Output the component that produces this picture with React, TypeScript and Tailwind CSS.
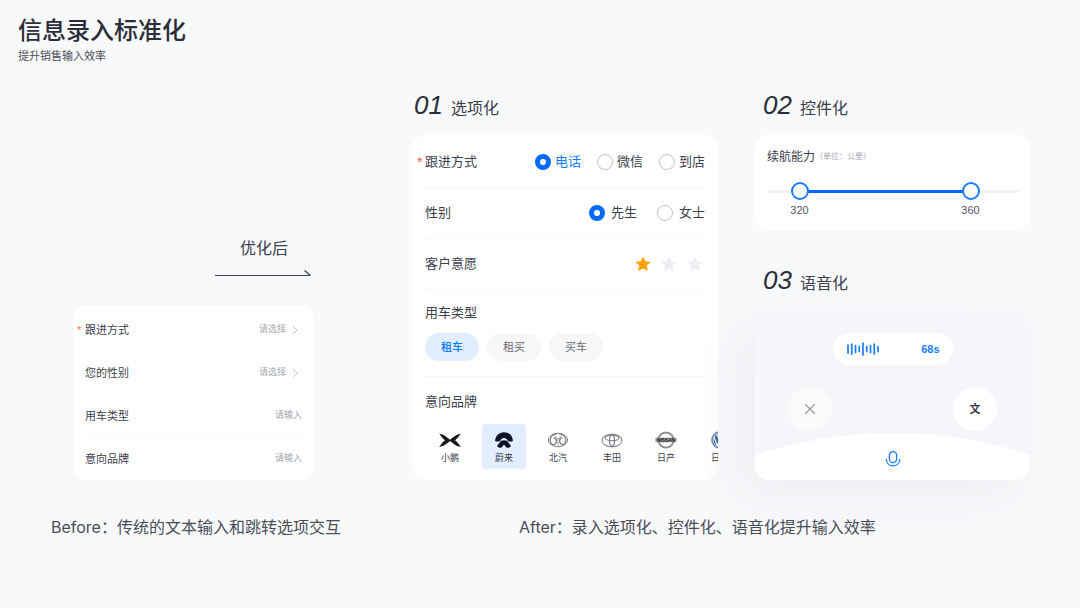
import { useState, type ReactNode } from 'react';
import clsx from 'clsx';

interface HeadingProps {
  index: string;
  title: string;
  className?: string;
}

function Heading({ index, title, className = '' }: HeadingProps) {
  return (
    <h2 className={`flex h-8 items-baseline gap-2 leading-8 text-[#2b2e38] ${className}`}>
      <span className="text-[26px] italic">{index}</span>
      <span className="text-base text-[#3c404b]">{title}</span>
    </h2>
  );
}

/* ---------- Before ---------- */

interface PlainFieldProps {
  id: string;
  label: string;
  required?: boolean;
  divider?: boolean;
  options?: string[];
}

function PlainField({ id, label, required, divider, options }: PlainFieldProps) {
  return (
    <div
      className={clsx(
        'relative flex h-[43px] items-center justify-between border-t',
        divider ? 'border-[#f6f7f9]' : 'border-transparent'
      )}
    >
      {required && <span className="absolute -left-2 text-[11px] text-[#ff7433]">*</span>}
      <label htmlFor={id} className="shrink-0 text-[11px] text-[#3c404b]">
        {label}
      </label>
      {options ? (
        <div className="flex items-center gap-1 pr-[3px]">
          <select id={id} defaultValue="" className="appearance-none bg-transparent text-[9px] text-[#a3a6ae] outline-none">
            <option value="">请选择</option>
            {options.map((option) => (
              <option key={option}>{option}</option>
            ))}
          </select>
          <svg className="h-2.5 w-2" viewBox="0 0 8 10" fill="none" stroke="#c3c6cc" strokeWidth="1">
            <path d="M2 1l4 4-4 4" />
          </svg>
        </div>
      ) : (
        <input
          id={id}
          placeholder="请输入"
          className="w-20 bg-transparent text-right text-[9px] text-[#3c404b] outline-none placeholder:text-[#a3a6ae]"
        />
      )}
    </div>
  );
}

function BeforeForm() {
  return (
    <form className="rounded-[10px] bg-white px-[11px] pt-0.5">
      <PlainField id="before-follow" label="跟进方式" required options={['电话', '微信', '到店']} />
      <PlainField id="before-gender" label="您的性别" options={['先生', '女士']} />
      <PlainField id="before-usage" label="用车类型" />
      <PlainField id="before-brand" label="意向品牌" divider />
    </form>
  );
}

/* ---------- 01 options ---------- */

function OptionRow({ label, required, children }: { label: string; required?: boolean; children: ReactNode }) {
  return (
    <div className="relative flex h-[51px] items-center justify-between border-b border-[#f6f7f9]">
      {required && <span className="absolute -left-2 text-sm text-[#ff5a4e]">*</span>}
      <span>{label}</span>
      {children}
    </div>
  );
}

interface RadioProps {
  name: string;
  value: string;
  current: string;
  highlight?: boolean;
  onSelect: (value: string) => void;
  className: string;
}

function Radio({ name, value, current, highlight, onSelect, className }: RadioProps) {
  const checked = value === current;
  return (
    <label className={clsx('flex items-center', className, checked && highlight && 'text-[#0a7aff]')}>
      <input
        type="radio"
        name={name}
        value={value}
        checked={checked}
        onChange={() => onSelect(value)}
        className="size-4 appearance-none rounded-full border border-[#bfc3cd] bg-white checked:border-[5px] checked:border-[#006aff]"
      />
      {value}
    </label>
  );
}

function XpengLogo() {
  return (
    <svg className="h-[18px] w-[22px]" viewBox="0 0 22 18" fill="#15171c">
      <path d="M.2 2.600l4.400 1.300 6 4.300v1.100H5.800L2.600 6z" />
      <path d="M21.800 2.600l-4.400 1.300-6 4.300v1.100h4.800L19.400 6z" />
      <path d="M.2 16l4.400-1.300 6-4.300V9.300H5.800l-3.200 3.300z" />
      <path d="M21.800 16l-4.400-1.300-6-4.300V9.300h4.800l3.200 3.300z" />
      <path d="M6.500 8.700h9v1.300h-9z" />
    </svg>
  );
}

function NioLogo() {
  return (
    <svg className="h-[18px] w-[22px]" viewBox="0 0 22 18" fill="#0c1424">
      <path d="M2.100 9.900C2.300 4.900 6 1.200 11 1.200s8.700 3.700 8.900 8.700c-1.500.7-3.300.7-4.900 0C14 7.900 12.700 6.900 11 6.900S8 7.900 7 9.900c-1.600.7-3.400.7-4.900 0z" />
      <path d="M11 9.300c2.300 0 3.500.7 4.400 2.300l2.600 3.300c-1 1.400-2.500 2-4.300 1.900L11 13.700l-2.700 3.100c-1.800.1-3.300-.5-4.300-1.900l2.600-3.300C7.500 10 8.700 9.300 11 9.300z" />
    </svg>
  );
}

function BaicLogo() {
  return (
    <svg className="h-[18px] w-[22px]" viewBox="0 0 22 18" fill="none" stroke="#85878b">
      <ellipse cx="11" cy="9" rx="9.600" ry="6.800" strokeWidth="1" />
      <path d="M9.800 3.200C6 2.800 3.200 5.600 3.200 9c0 2.400 1.300 4.300 2.800 4.600 1.800.3 3.400-1.600 3.400-3.600 0-1.700-1-3-2.600-3.200" strokeWidth="1.400" />
      <path d="M12.200 3.200C16 2.800 18.800 5.600 18.800 9c0 2.400-1.300 4.300-2.800 4.600-1.800.3-3.400-1.600-3.400-3.600 0-1.700 1-3 2.600-3.200" strokeWidth="1.400" />
      <path d="M7.500 4.200L11 8.200l3.500-4M11 8.200v6.600" stroke="#a5a7ab" />
    </svg>
  );
}

function ToyotaLogo() {
  return (
    <svg className="h-[18px] w-[22px]" viewBox="0 0 22 18" fill="none" stroke="#8d9197">
      <ellipse cx="11" cy="9.500" rx="9.900" ry="6.300" strokeWidth="1.200" />
      <ellipse cx="11" cy="7" rx="6.800" ry="2.600" strokeWidth="1.200" />
      <ellipse cx="11" cy="9.500" rx="2.500" ry="5.700" stroke="#74787e" strokeWidth="1.200" />
    </svg>
  );
}

function NissanLogo() {
  return (
    <svg className="h-[18px] w-[22px]" viewBox="0 0 22 18">
      <circle cx="11" cy="9" r="7.600" fill="none" stroke="#8b8d90" strokeWidth="2" />
      <rect x=".4" y="6.700" width="21.200" height="4.600" rx=".8" fill="#9b9da0" />
      <text x="11" y="10.700" textAnchor="middle" fontSize="4.800" fontWeight="700" fill="#1f2023">
        NISSAN
      </text>
    </svg>
  );
}

function VolkswagenLogo() {
  return (
    <svg className="h-[18px] w-[22px]" viewBox="0 0 22 18" fill="none">
      <circle cx="11" cy="9" r="8.500" fill="#35639b" stroke="#8fa3bd" strokeWidth=".8" />
      <circle cx="11" cy="9" r="7" stroke="#dfe7f0" strokeWidth="1" />
      <path d="M7.400 3L11 9.500 14.600 3M4.800 5.500l3.400 9L11 9.500l2.800 5 3.400-9" stroke="#eef3f9" strokeWidth="1.400" />
    </svg>
  );
}

const brands = [
  { id: 'xpeng', name: '小鹏', logo: <XpengLogo /> },
  { id: 'nio', name: '蔚来', logo: <NioLogo /> },
  { id: 'baic', name: '北汽', logo: <BaicLogo /> },
  { id: 'toyota', name: '丰田', logo: <ToyotaLogo /> },
  { id: 'nissan', name: '日产', logo: <NissanLogo /> },
  { id: 'vw', name: '日产', logo: <VolkswagenLogo /> },
];

function OptionsForm() {
  const [follow, setFollow] = useState('电话');
  const [gender, setGender] = useState('先生');
  const [rating, setRating] = useState(1);
  const [usage, setUsage] = useState('租车');
  const [brand, setBrand] = useState('nio');

  return (
    <form className="grow overflow-hidden rounded-[14px] bg-white px-[13px] pt-0.5 text-[13px] leading-5 text-[#3c404b]">
      <OptionRow label="跟进方式" required>
        <div className="flex gap-4">
          {['电话', '微信', '到店'].map((value) => (
            <Radio key={value} name="follow" value={value} current={follow} highlight onSelect={setFollow} className="gap-1" />
          ))}
        </div>
      </OptionRow>
      <OptionRow label="性别">
        <div className="flex gap-5">
          {['先生', '女士'].map((value) => (
            <Radio key={value} name="gender" value={value} current={gender} onSelect={setGender} className="gap-1.5" />
          ))}
        </div>
      </OptionRow>
      <OptionRow label="客户意愿">
        <div className="flex gap-2.5 pr-0.5">
          {[1, 2, 3].map((star) => (
            <button key={star} type="button" aria-label={`${star} 星`} onClick={() => setRating(star)}>
              <svg className="size-4" viewBox="0 0 16 16" fill={star <= rating ? '#ffa200' : '#ebeef3'}>
                <path d="M8 .4l2.300 4.900 5.400.6-4 3.700 1.100 5.400L8 12.400 3.200 15l1.100-5.400-4-3.700 5.400-.6z" />
              </svg>
            </button>
          ))}
        </div>
      </OptionRow>

      <div className="border-b border-[#f6f7f9] pb-[15px] pt-[13px]">
        <p>用车类型</p>
        <div className="mt-2.5 flex gap-2">
          {['租车', '租买', '买车'].map((value) => (
            <button
              key={value}
              type="button"
              onClick={() => setUsage(value)}
              className={clsx(
                'h-7 w-[54px] rounded-full text-[11px]',
                value === usage ? 'bg-[#e2eeff] font-medium text-[#0a7aff]' : 'bg-[#f7f7f8] text-[#6d6f76]'
              )}
            >
              {value}
            </button>
          ))}
        </div>
      </div>

      <div className="pb-[11px] pt-[15px]">
        <p>意向品牌</p>
        <div className="mt-3 flex gap-2.5 pl-[3px]">
          {brands.map(({ id, name, logo }) => (
            <button
              key={id}
              type="button"
              onClick={() => setBrand(id)}
              className={clsx(
                'flex h-[45px] w-11 shrink-0 flex-col items-center gap-[3px] rounded-[4px] pt-[7px]',
                id === brand && 'bg-[#e2eeff]'
              )}
            >
              {logo}
              <span className="text-[9px] leading-3">{name}</span>
            </button>
          ))}
        </div>
      </div>
    </form>
  );
}

/* ---------- 02 range ---------- */

const MIN = 314.5;
const MAX = 369;

// Centre of an 18px thumb along the track
function thumbCentre(value: number) {
  const ratio = (value - MIN) / (MAX - MIN);
  return `calc(9px + (100% - 18px) * ${ratio})`;
}

const rangeClass =
  'pointer-events-none absolute inset-0 h-[18px] w-full appearance-none bg-transparent outline-none [&::-webkit-slider-thumb]:pointer-events-auto [&::-webkit-slider-thumb]:size-[18px] [&::-webkit-slider-thumb]:appearance-none [&::-webkit-slider-thumb]:rounded-full [&::-webkit-slider-thumb]:border-2 [&::-webkit-slider-thumb]:border-[#1a7dff] [&::-webkit-slider-thumb]:bg-white';

function RangeCard() {
  const [low, setLow] = useState(320);
  const [high, setHigh] = useState(360);

  return (
    <div className="rounded-[14px] bg-white px-3 py-3">
      <p className="flex items-center text-xs leading-5 text-[#3c404b]">
        续航能力
        <span className="text-[8px] text-[#a3a6ae]">（单位：公里）</span>
      </p>
      <div className="relative mt-[15px] flex h-[18px] items-center">
        <div className="h-[3px] w-full rounded-full bg-[#f0f0f7]" />
        <div
          className="absolute h-[3px] bg-[#006aff]"
          style={{ left: thumbCentre(low), right: `calc(100% - ${thumbCentre(high)})` }}
        />
        <input
          type="range"
          aria-label="最低续航"
          min={MIN}
          max={MAX}
          step={0.5}
          value={low}
          onChange={(e) => setLow(Math.min(Number(e.target.value), high))}
          className={rangeClass}
        />
        <input
          type="range"
          aria-label="最高续航"
          min={MIN}
          max={MAX}
          step={0.5}
          value={high}
          onChange={(e) => setHigh(Math.max(Number(e.target.value), low))}
          className={rangeClass}
        />
      </div>
      <div className="relative mt-0.5 h-4 text-[11px] leading-4 text-[#55585f]">
        <output className="absolute -translate-x-1/2" style={{ left: thumbCentre(low) }}>
          {low}
        </output>
        <output className="absolute -translate-x-1/2" style={{ left: thumbCentre(high) }}>
          {high}
        </output>
      </div>
    </div>
  );
}

/* ---------- 03 voice ---------- */

const bars = [8, 10, 7, 5, 12, 5, 7, 10, 5];

function VoiceCard() {
  return (
    <div className="overflow-hidden rounded-[14px] bg-[#f5f6fa] pt-5 shadow-[-16px_16px_48px_rgba(40,60,90,0.06)]">
      <div className="mx-auto flex h-8 w-[120px] items-center justify-between rounded-full bg-white pl-3.5 pr-[13px]">
        <svg className="h-4 w-8" viewBox="0 0 32 16" stroke="#1a7dff" strokeWidth="1.700" strokeLinecap="round">
          {bars.map((height, i) => (
            <path key={i} d={`M${1 + i * 3.75} ${8 - height / 2}v${height}`} />
          ))}
        </svg>
        <span className="text-[11px] font-bold text-[#1a7dff]">68s</span>
      </div>
      <div className="mt-[22px] flex justify-between px-[33px]">
        <button type="button" aria-label="取消" className="flex size-11 items-center justify-center rounded-full bg-[#fbfbfc]">
          <svg className="size-3" viewBox="0 0 12 12" stroke="#97999e" strokeWidth="1.200" strokeLinecap="round">
            <path d="M1.500 1.500l9 9M10.500 1.500l-9 9" />
          </svg>
        </button>
        <button type="button" className="size-11 rounded-full bg-white text-[11px] font-bold text-[#3a3b3f]">
          文
        </button>
      </div>
      <div className="relative mt-0.5 flex h-[47px] justify-center overflow-hidden pt-1">
        <div className="absolute left-1/2 top-0 size-[876px] -translate-x-1/2 rounded-full bg-white" />
        <button type="button" aria-label="按住说话" className="relative">
          <svg className="size-4" viewBox="0 0 16 16" fill="none" stroke="#1a7dff" strokeWidth="1.300" strokeLinecap="round">
            <rect x="4.400" y=".7" width="7.200" height="11" rx="3.600" />
            <path d="M1.200 8.300c.3 3.900 3.100 6.600 6.800 6.600s6.500-2.700 6.800-6.600" />
          </svg>
        </button>
      </div>
    </div>
  );
}

export default function App() {
  return (
    <div className="min-h-screen bg-[#f8f9fb] font-['Liberation_Sans','Noto_Sans_CJK_SC',sans-serif]">
      <header className="px-[18px] pt-[15px]">
        <h1 className="text-2xl leading-8 font-medium text-[#2b2e38]">信息录入标准化</h1>
        <p className="mt-px text-[11px] leading-4 text-[#4a4d57]">提升销售输入效率</p>
      </header>

      <main className="flex gap-[68px] pb-8 pl-[51px] pr-[50px] pt-[25px]">
        <section className="flex min-w-0 flex-[293] flex-col justify-end">
          <div className="ml-[23px] mr-[31px]">
            <div className="mb-[29px] ml-auto mr-0.5 w-24">
              <p className="pl-[25px] text-base leading-6 text-[#3c404b]">优化后</p>
              <svg className="mt-[9px] h-[7px] w-24" viewBox="0 0 96 7" fill="none" stroke="#3c404b" strokeWidth="1.200">
                <path d="M0 5.500h95.500M89.500.5l6 5" />
              </svg>
            </div>
            <BeforeForm />
          </div>
          <p className="mt-[35px] whitespace-nowrap font-['Inter','Noto_Sans_CJK_SC',sans-serif] leading-6 text-[#4a4d57]">
            Before：传统的文本输入和跳转选项交互
          </p>
        </section>

        <section className="min-w-0 flex-[618]">
          <div className="flex gap-[37px]">
            <div className="flex min-w-0 flex-[306] flex-col gap-3.5">
              <Heading index="01" title="选项化" className="pl-0.5" />
              <OptionsForm />
            </div>
            <div className="min-w-0 flex-[275]">
              <Heading index="02" title="控件化" className="mb-3.5 pl-2" />
              <RangeCard />
              <Heading index="03" title="语音化" className="mb-[17px] mt-[34px] pl-2" />
              <VoiceCard />
            </div>
          </div>
          <p className="mt-[35px] pl-[107px] font-['Inter','Noto_Sans_CJK_SC',sans-serif] leading-6 text-[#4a4d57]">
            After：录入选项化、控件化、语音化提升输入效率
          </p>
        </section>
      </main>
    </div>
  );
}
